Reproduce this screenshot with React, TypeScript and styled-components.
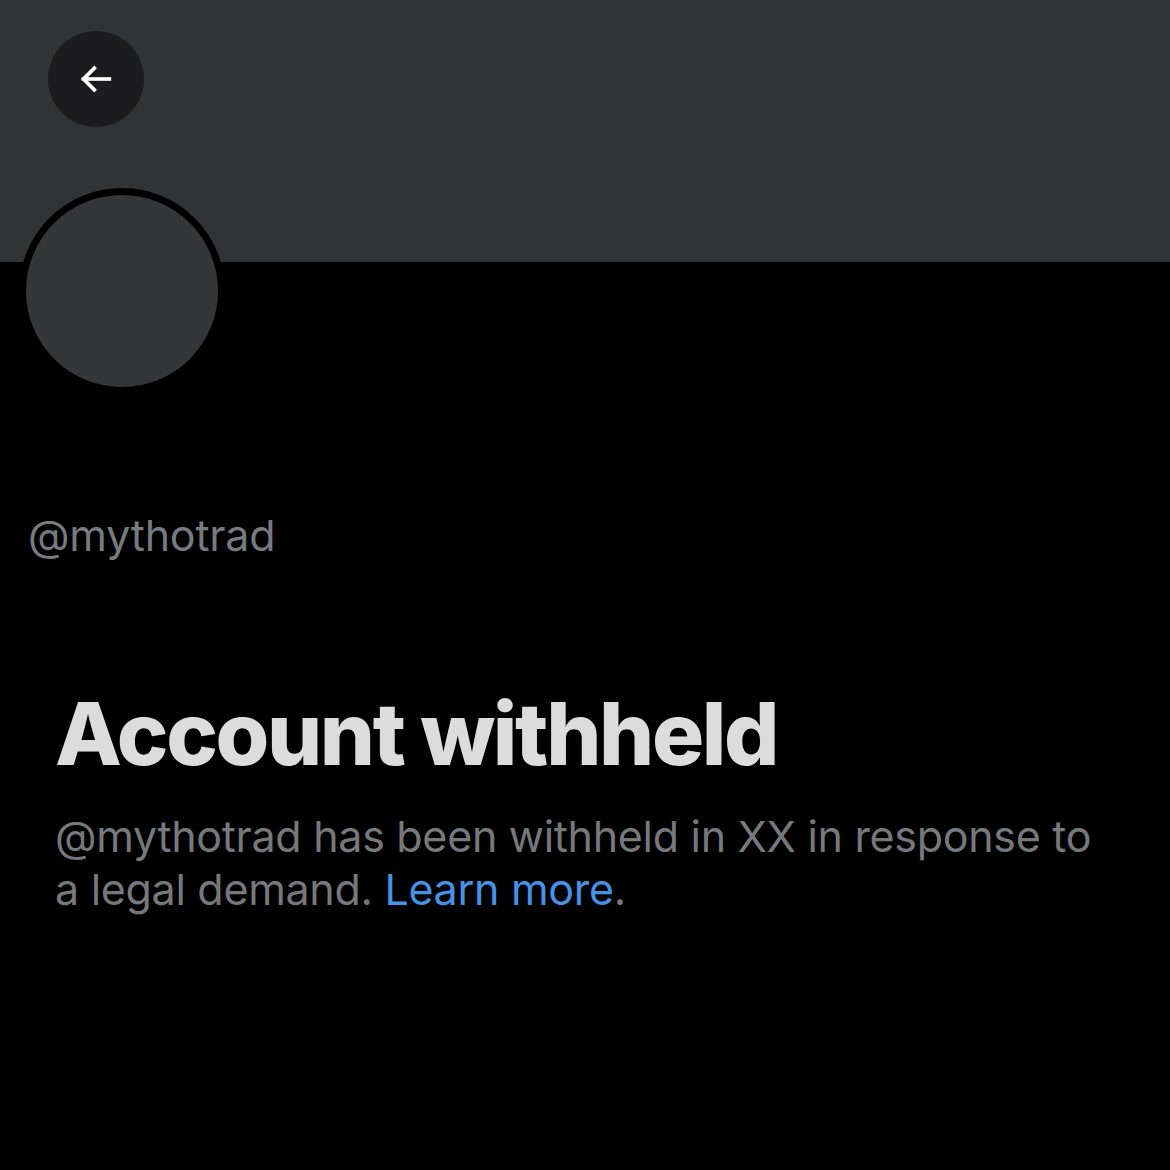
import React from "react";
import styled, { createGlobalStyle } from "styled-components";

const Global = createGlobalStyle`
  html, body { margin: 0; padding: 0; background: #000; }
  body { font-family: Inter, "Noto Sans", sans-serif; width: 1170px; height: 1170px; overflow: hidden; }
`;

const Page = styled.div`
  width: 1170px;
  height: 1170px;
  background: #000;
  display: flex;
  flex-direction: column;
`;

const Banner = styled.div`
  height: 262px;
  background: #323337;
  padding: 31px 0 0 48px;
  box-sizing: border-box;
`;

const BackButton = styled.button`
  width: 96px;
  height: 96px;
  border-radius: 50%;
  border: none;
  background: #1c1c1e;
  display: flex;
  align-items: center;
  justify-content: center;
  padding: 0;
`;

const Avatar = styled.div`
  width: 192px;
  height: 192px;
  border-radius: 50%;
  background: #35363a;
  border: 7px solid #000;
  margin: -74px 0 0 19px;
`;

const Handle = styled.div`
  margin: 116px 0 0 28px;
  color: #777a7f;
  font-size: 43px;
  line-height: 50px;
  letter-spacing: -0.2px;
`;

const Notice = styled.div`
  margin: 124px 0 0 55px;
  display: flex;
  flex-direction: column;
`;

const Title = styled.h1`
  margin: 0;
  color: #dcdcdc;
  font-size: 87px;
  font-weight: 800;
  line-height: 100px;
  letter-spacing: -2.4px;
`;

const Body = styled.p`
  margin: 26px 0 0;
  color: #77787c;
  font-size: 43px;
  line-height: 53px;
  width: 1060px;
  letter-spacing: -0.3px;
`;

const Link = styled.a`
  color: #4593e6;
  text-decoration: none;
`;

export default function App() {
  return (
    <>
      <Global />
      <Page>
        <Banner>
          <BackButton aria-label="Back">
            <svg width="40" height="40" viewBox="0 0 24 24" fill="none" stroke="#fff" strokeWidth="2.2" strokeLinecap="square">
              <path d="M20 12H4.5" />
              <path d="M11 5.5L4.5 12l6.5 6.5" />
            </svg>
          </BackButton>
        </Banner>
        <Avatar />
        <Handle>@mythotrad</Handle>
        <Notice>
          <Title>Account withheld</Title>
          <Body>
            @mythotrad has been withheld in XX in response to a legal demand. <Link href="#">Learn more</Link>.
          </Body>
        </Notice>
      </Page>
    </>
  );
}
